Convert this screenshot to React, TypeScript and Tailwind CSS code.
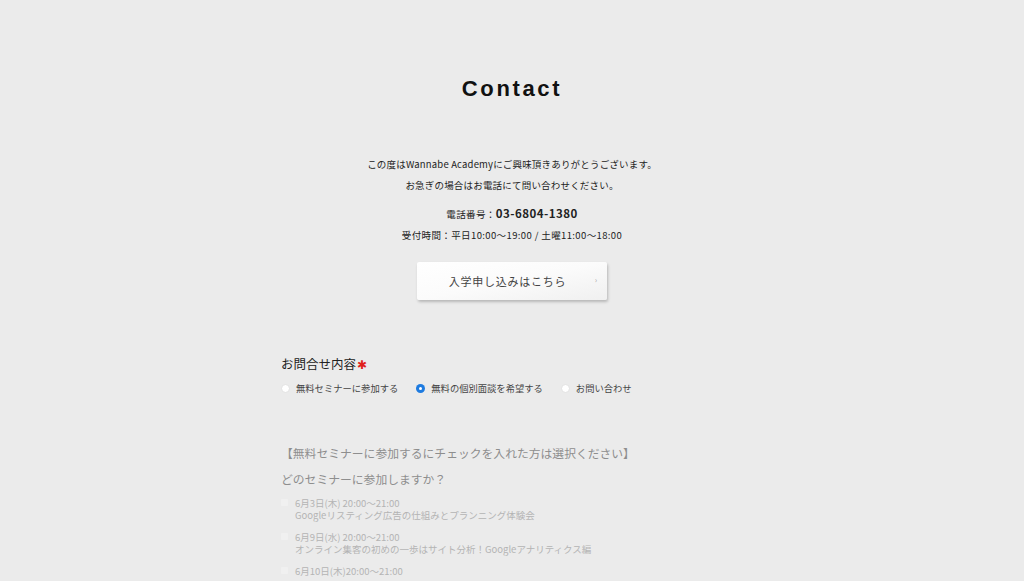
const seminars = [
  { date: '6月3日(木) 20:00〜21:00', title: 'Googleリスティング広告の仕組みとプランニング体験会' },
  { date: '6月9日(水) 20:00〜21:00', title: 'オンライン集客の初めの一歩はサイト分析！Googleアナリティクス編' },
  { date: '6月10日(木)20:00〜21:00', title: '' },
];

function Radio({ label, checked }: { label: string; checked?: boolean }) {
  return (
    <label className="flex items-center gap-[6px]">
      {checked ? (
        <span className="w-[9px] h-[9px] rounded-full bg-[#1e7be0] flex items-center justify-center">
          <span className="w-[3px] h-[3px] rounded-full bg-white" />
        </span>
      ) : (
        <span className="w-[9px] h-[9px] rounded-full bg-white border border-[#e2e2e2]" />
      )}
      <span>{label}</span>
    </label>
  );
}

export default function App() {
  return (
    <div
      className="w-full h-[581px] overflow-hidden bg-[#ebebeb] text-[#222]"
      style={{ fontFamily: '"Noto Sans CJK JP", "Noto Sans", sans-serif' }}
    >
      <div className="flex flex-col items-center pt-[74px]">
        <h1
          className="text-[22px] leading-[30px] font-bold tracking-[0.12em] text-[#111]"
          style={{ fontFamily: '"Liberation Sans", "Noto Sans CJK JP", sans-serif' }}
        >
          Contact
        </h1>
        <div className="mt-[50px] flex flex-col items-center text-[9.5px] leading-[21px] tracking-[0.02em]">
          <p>この度はWannabe Academyにご興味頂きありがとうございます。</p>
          <p>お急ぎの場合はお電話にて問い合わせください。</p>
        </div>
        <div className="mt-[7px] flex flex-col items-center text-[9.5px] tracking-[0.04em]">
          <p className="leading-[21px]">
            電話番号：<span className="text-[11.5px] font-bold tracking-[0.04em]">03-6804-1380</span>
          </p>
          <p className="leading-[20px]">受付時間：平日10:00〜19:00 / 土曜11:00〜18:00</p>
        </div>
        <button className="mt-[17px] w-[190px] h-[38px] pr-[9px] rounded-[2px] bg-gradient-to-br from-white via-[#fbfbfb] to-[#f0f0f0] shadow-[1px_2px_3px_rgba(0,0,0,0.22)] relative flex items-center justify-center text-[11px] tracking-[0.07em] text-[#444]">
          入学申し込みはこちら
          <span className="absolute right-[9px] top-[12px] text-[8px] text-[#aaa]">›</span>
        </button>
      </div>

      <div className="ml-[281px] mt-[55px] w-[460px]">
        <p className="flex items-center text-[12.5px] leading-[18px] text-[#222]">
          お問合せ内容<span className="ml-[1px] text-[#e0201a] text-[12px] leading-[12px]">✱</span>
        </p>
        <div className="mt-[9px] flex items-center gap-[18px] text-[9.3px] text-[#444]">
          <Radio label="無料セミナーに参加する" />
          <Radio label="無料の個別面談を希望する" checked />
          <Radio label="お問い合わせ" />
        </div>
        <p className="mt-[47px] text-[11.8px] leading-[20px] text-[#8e8e8e]">
          【無料セミナーに参加するにチェックを入れた方は選択ください】
        </p>
        <p className="mt-[6px] text-[11.8px] leading-[20px] text-[#8e8e8e]">
          どのセミナーに参加しますか？
        </p>
        <ul className="mt-[8px] flex flex-col gap-[10px]">
          {seminars.map((s) => (
            <li key={s.date} className="flex items-start gap-[7px] text-[9.5px] leading-[12px] text-[#b4b4b4]">
              <span className="mt-[2px] w-[7px] h-[7px] rounded-[1px] bg-[#f0f0f0]" />
              <div>
                <p>{s.date}</p>
                {s.title && <p>{s.title}</p>}
              </div>
            </li>
          ))}
        </ul>
      </div>
    </div>
  );
}
